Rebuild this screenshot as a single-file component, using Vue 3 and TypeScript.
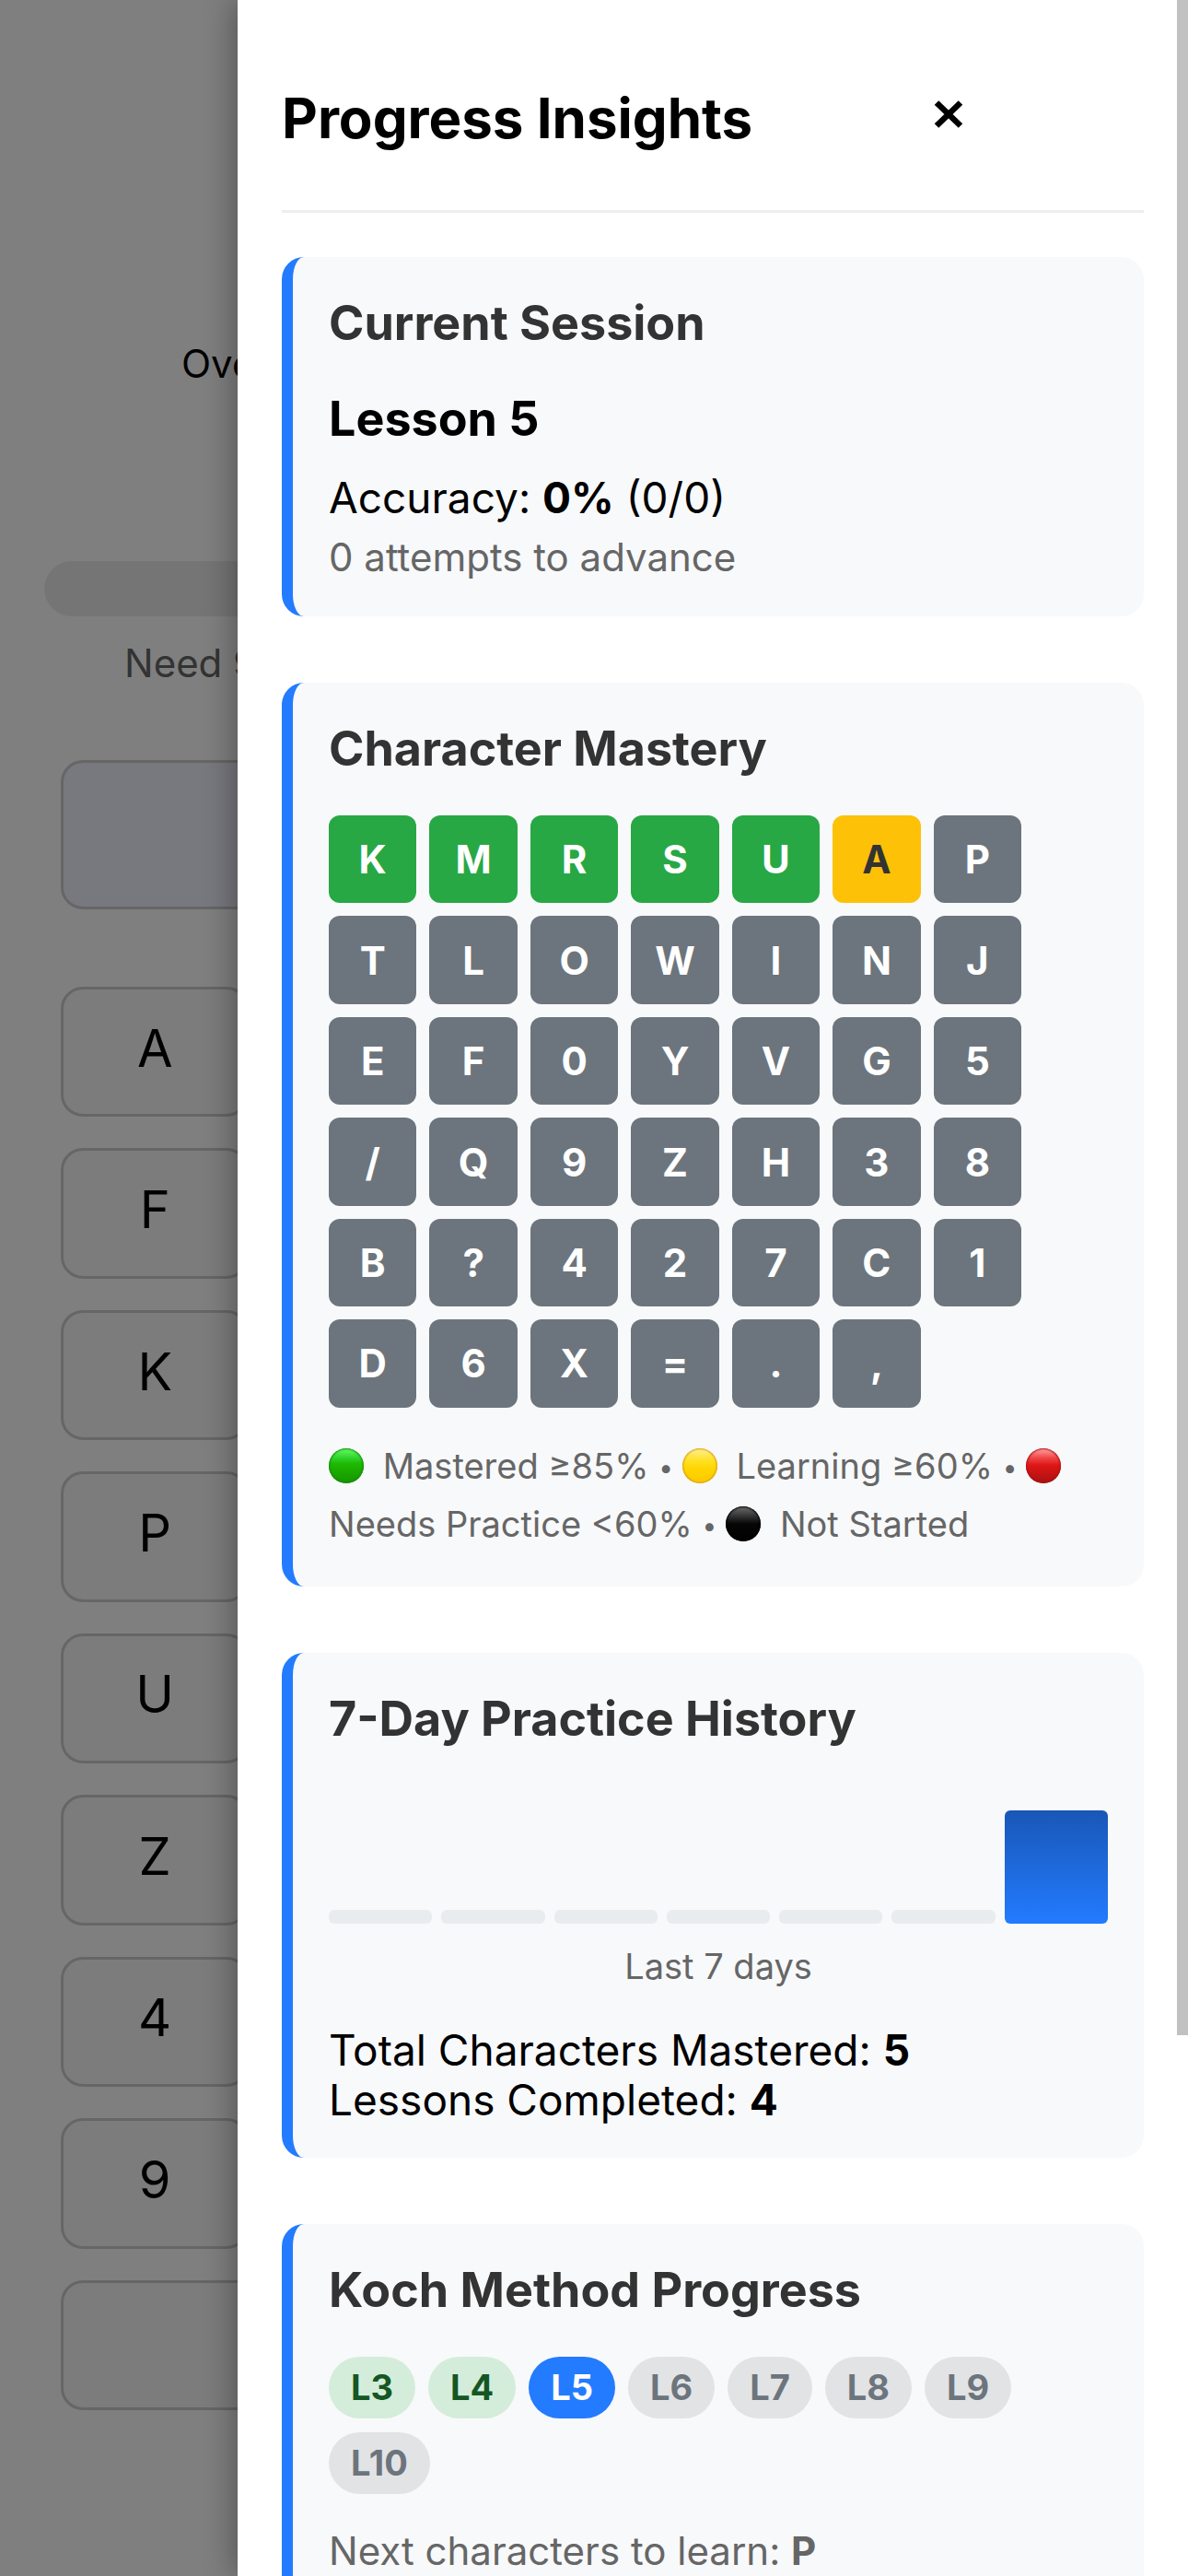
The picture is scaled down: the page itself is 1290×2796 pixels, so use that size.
<script setup lang="ts">
type Mastery = 'mastered' | 'learning' | 'practice' | 'idle'

interface CharCell {
  char: string
  state: Mastery
}

const order = 'KMRSUAPTLOWINJEF0YVG5/Q9ZH38B?427C1D6X=.,'
const mastered = new Set(['K', 'M', 'R', 'S', 'U'])
const learning = new Set(['A'])

const cells: CharCell[] = [...order].map((char) => ({
  char,
  state: mastered.has(char) ? 'mastered' : learning.has(char) ? 'learning' : 'idle',
}))

const history: number[] = [0, 0, 0, 0, 0, 0, 82]

const currentLesson = 5
const lessons: number[] = [3, 4, 5, 6, 7, 8, 9, 10]

function lessonState(n: number): string {
  if (n < currentLesson) return 'done'
  return n === currentLesson ? 'current' : 'upcoming'
}

const keys: string[] = ['A', 'F', 'K', 'P', 'U', 'Z', '4', '9']
</script>

<template>
  <div class="app">
    <main class="trainer">
      <p class="overall">Overall</p>
      <div class="meter"></div>
      <p class="need">Need 90%</p>
      <div class="prompt"></div>
      <div class="keys">
        <button v-for="k in keys" :key="k" type="button" class="key">{{ k }}</button>
        <button type="button" class="key wide" aria-label="Space"></button>
      </div>
    </main>

    <div class="overlay"></div>

    <aside class="panel">
      <div class="panel-body">
        <header class="panel-head">
          <h2>Progress Insights</h2>
          <button type="button" class="close" aria-label="Close">
            <svg width="32" height="40" viewBox="0 0 32 40" aria-hidden="true">
              <path d="M3 3.5 L29 28.5 M29 3.5 L3 28.5" stroke="#000" stroke-width="6.5" fill="none" />
            </svg>
          </button>
        </header>

        <section class="card">
          <h3>Current Session</h3>
          <p class="lesson">Lesson 5</p>
          <p class="stat accuracy">Accuracy: <strong>0%</strong> (0/0)</p>
          <p class="note attempts">0 attempts to advance</p>
        </section>

        <section class="card">
          <h3>Character Mastery</h3>
          <div class="mastery">
            <div v-for="c in cells" :key="c.char" class="cell" :class="c.state">{{ c.char }}</div>
          </div>
          <p class="legend">
            <span class="dot green"></span> Mastered ≥85% <span class="sep">•</span>
            <span class="dot yellow"></span> Learning ≥60% <span class="sep">•</span>
            <span class="dot red"></span> Needs Practice &lt;60% <span class="sep">•</span>
            <span class="dot black"></span> Not Started
          </p>
        </section>

        <section class="card">
          <h3>7-Day Practice History</h3>
          <div class="chart">
            <div
              v-for="(v, i) in history"
              :key="i"
              class="bar"
              :class="{ active: v > 0 }"
              :style="{ height: (v || 10) + '%' }"
            ></div>
          </div>
          <p class="caption">Last 7 days</p>
          <p class="stat">Total Characters Mastered: <strong>5</strong></p>
          <p class="stat">Lessons Completed: <strong>4</strong></p>
        </section>

        <section class="card">
          <h3>Koch Method Progress</h3>
          <div class="pills">
            <span v-for="n in lessons" :key="n" class="pill" :class="lessonState(n)">L{{ n }}</span>
          </div>
          <p class="note next">Next characters to learn: <strong>P</strong></p>
        </section>
      </div>
      <div class="scroll-thumb"></div>
    </aside>
  </div>
</template>

<style>
html,
body {
  margin: 0;
  height: 100%;
  overflow: hidden;
}
</style>

<style scoped>
.app {
  position: relative;
  height: 100vh;
  overflow: hidden;
  background: #fff;
  color: #000;
  font-family: Inter, "Liberation Sans", sans-serif;
}

p,
h2,
h3 {
  margin: 0;
}

strong {
  font-weight: 700;
}

button {
  font-family: inherit;
  color: inherit;
  padding: 0;
}

/* Trainer page behind the overlay */
.trainer {
  padding: 365px 48px 0;
}

.overall {
  padding-left: 149px;
  font-size: 42px;
  line-height: 60px;
}

.meter {
  height: 60px;
  margin-top: 184px;
  border-radius: 30px;
  background: #ebebeb;
}

.need {
  margin-top: 21px;
  padding-left: 87px;
  font-size: 42px;
  line-height: 60px;
  color: #666;
}

.prompt {
  box-sizing: border-box;
  height: 162px;
  margin: 75px 18px 0;
  border: 3px solid #ccc;
  border-radius: 24px;
  background: #f0f0ff;
}

.keys {
  display: grid;
  grid-template-columns: repeat(5, 1fr);
  grid-auto-rows: 1fr;
  gap: 34px;
  height: 1545px;
  margin: 84px 18px 0;
}

.key {
  grid-column: 1;
  border: 3px solid #ccc;
  border-radius: 24px;
  background: #f8f8f8;
  font-size: 56px;
  line-height: 68px;
  padding-bottom: 8px;
}

.key.wide {
  grid-column: 1 / -1;
}

.overlay {
  position: absolute;
  inset: 0;
  background: rgba(0, 0, 0, 0.5);
}

/* Sliding insights panel */
.panel {
  position: absolute;
  top: 0;
  right: 0;
  bottom: 0;
  width: 80%;
  background: #fff;
  box-shadow: -6px 0 30px rgba(0, 0, 0, 0.3);
}

.panel-body {
  box-sizing: border-box;
  height: 100%;
  padding: 48px 48px 0;
  overflow: hidden;
}

.scroll-thumb {
  position: absolute;
  top: 0;
  right: 0;
  width: 12px;
  height: 79%;
  background: #c1c1c1;
}

.panel-head {
  display: flex;
  align-items: center;
  padding: 42px 0 62px;
  margin-bottom: 48px;
  border-bottom: 3px solid #eee;
}

h2 {
  font-size: 60px;
  line-height: 76px;
  font-weight: 700;
}

.close {
  flex: 1;
  display: flex;
  justify-content: center;
  border: 0;
  background: none;
}

.card {
  padding: 40px 39px 36px;
  margin-bottom: 72px;
  border-left: 12px solid #237bff;
  border-radius: 24px;
  background: #f8f9fb;
}

h3 {
  margin-bottom: 40px;
  font-size: 52px;
  line-height: 64px;
  font-weight: 700;
  color: #333;
}

.lesson {
  font-size: 52px;
  line-height: 64px;
  font-weight: 700;
}

.stat {
  font-size: 46px;
  line-height: 54px;
}

.accuracy {
  margin-top: 26px;
}

.note {
  font-size: 42px;
  line-height: 56px;
  color: #666;
}

.attempts {
  margin-top: 10px;
}

.mastery {
  display: grid;
  grid-template-columns: repeat(7, 1fr);
  gap: 14px;
  max-width: 752px;
}

.cell {
  display: flex;
  align-items: center;
  justify-content: center;
  aspect-ratio: 1;
  border-radius: 12px;
  font-size: 42px;
  font-weight: 700;
  color: #fff;
  background: #6c757d;
}

.cell.mastered {
  background: #28a745;
}

.cell.learning {
  background: #fdc108;
  color: #333;
}

.legend {
  margin-top: 32px;
  font-size: 38px;
  line-height: 63px;
  color: #666;
}

.sep {
  margin-right: 10px;
  font-size: 28px;
  line-height: 28px;
  vertical-align: 2px;
}

.dot {
  display: inline-block;
  width: 38px;
  height: 38px;
  margin-right: 10px;
  border-radius: 50%;
  vertical-align: -5px;
}

.green {
  background: linear-gradient(#5ff660 4%, #2fd32b 28%, #1db800 45%, #189400 100%);
  box-shadow: inset 0 0 2px 1px #148a0c;
}

.yellow {
  background: linear-gradient(#fff08a 4%, #ffe022 35%, #ffd500 60%, #fdc800 100%);
  box-shadow: inset 0 0 2px 1px #d99a10;
}

.red {
  background: linear-gradient(#ff9a9a 4%, #f14a4a 26%, #df1616 48%, #a81212 100%);
  box-shadow: inset 0 0 2px 1px #a81212;
}

.black {
  background: linear-gradient(#666 4%, #333 28%, #060606 50%, #000 100%);
  box-shadow: inset 0 0 2px 1px #000;
}

.chart {
  display: flex;
  align-items: flex-end;
  gap: 10px;
  height: 150px;
}

.bar {
  flex: 1;
  border-radius: 6px;
  background: #e9ecef;
}

.bar.active {
  background: linear-gradient(#1957b7, #237bff);
}

.caption {
  margin: 18px 0 36px;
  font-size: 38px;
  line-height: 56px;
  text-align: center;
  color: #666;
}

.pills {
  display: flex;
  flex-wrap: wrap;
  gap: 15px 14px;
}

.pill {
  padding: 0 24px;
  border-radius: 36px;
  font-size: 38px;
  line-height: 67px;
  font-weight: 700;
}

.pill.done {
  background: #d4edda;
  color: #155724;
}

.pill.current {
  background: #237bff;
  color: #fff;
}

.pill.upcoming {
  background: #e2e3e5;
  color: #6c757d;
}

.next {
  margin-top: 34px;
}
</style>
